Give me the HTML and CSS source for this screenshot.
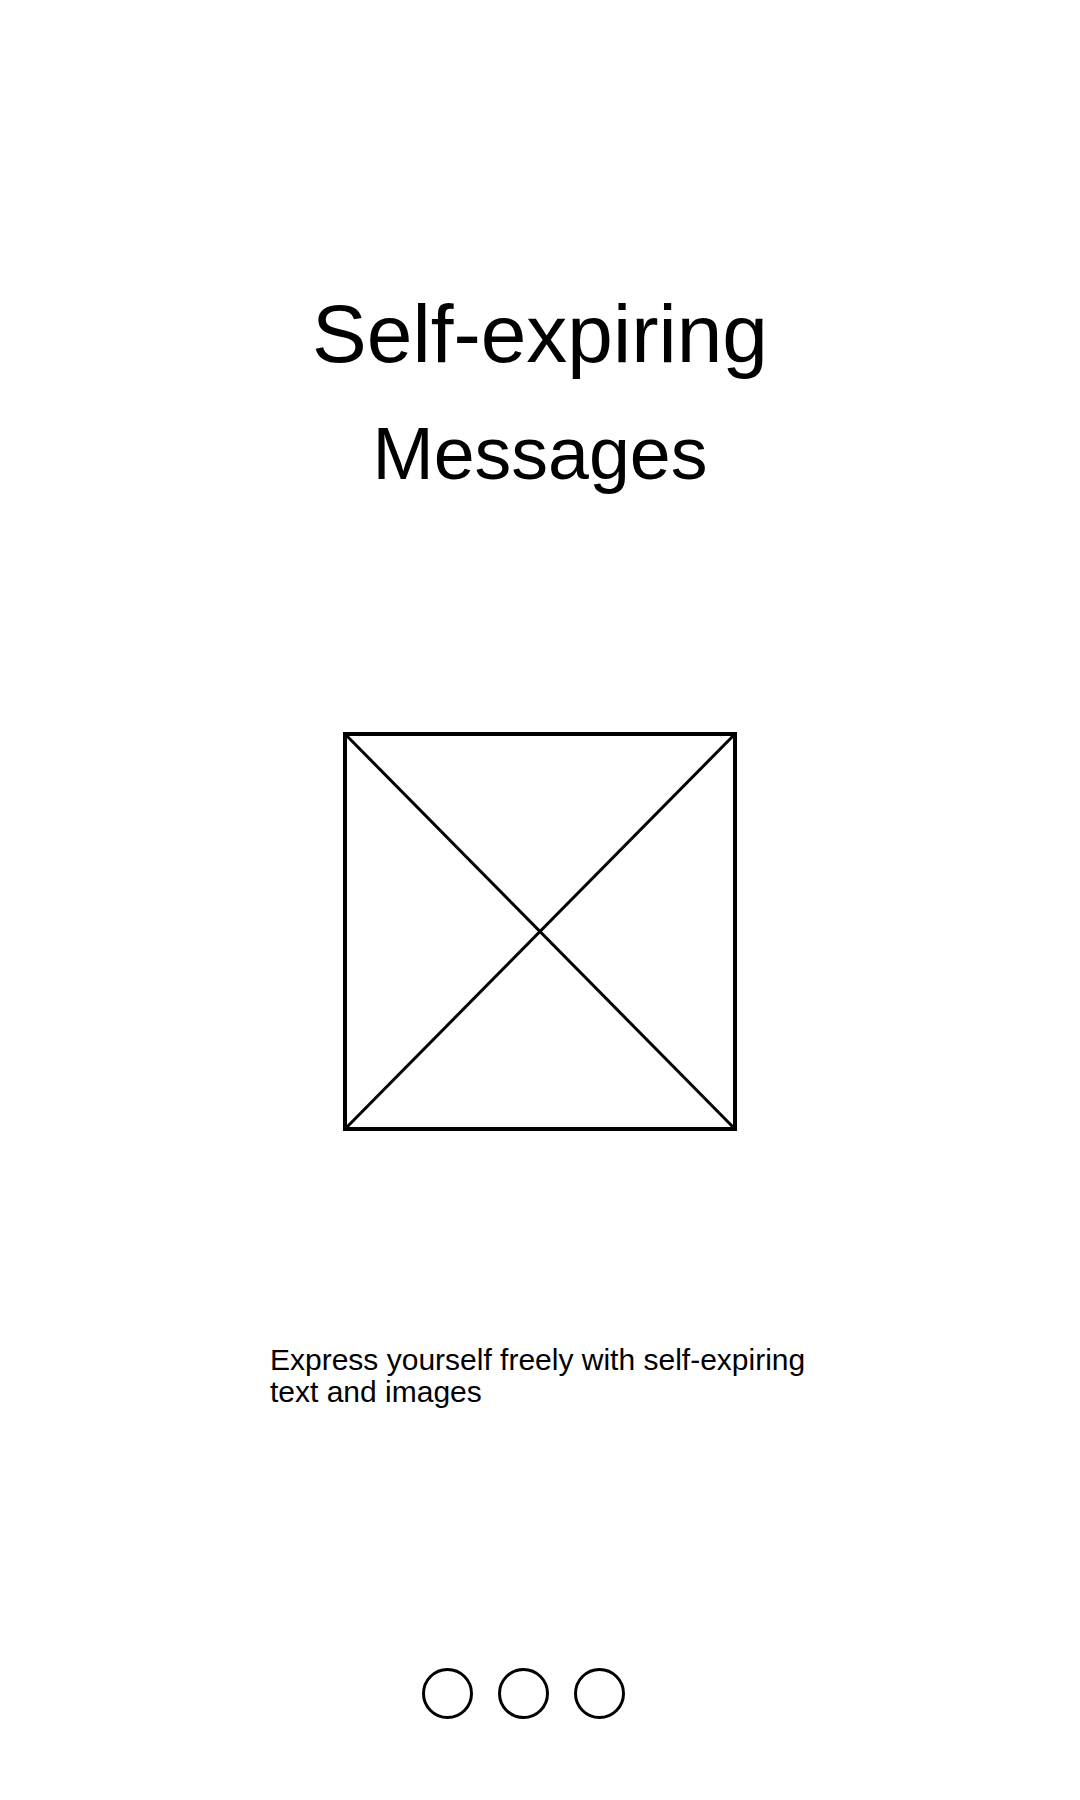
FILE: index.html
```html
<!DOCTYPE html>
<html lang="en">
<head>
<meta charset="utf-8">
<title>Self-expiring Messages</title>
<link rel="stylesheet" href="styles.css">
</head>
<body>
<main class="screen">
  <h1 class="title">
    <span class="title-line1">Self-expiring</span>
    <span class="title-line2">Messages</span>
  </h1>
  <div class="placeholder">
    <svg width="394" height="399" viewBox="0 0 394 399" aria-hidden="true">
      <rect x="2" y="2" width="390" height="395" fill="none" stroke="#000" stroke-width="4"/>
      <line x1="3" y1="3" x2="391" y2="396" stroke="#000" stroke-width="3"/>
      <line x1="391" y1="3" x2="3" y2="396" stroke="#000" stroke-width="3"/>
    </svg>
  </div>
  <p class="description">Express yourself freely with self-expiring text and images</p>
  <div class="dots">
    <span class="dot"></span>
    <span class="dot"></span>
    <span class="dot"></span>
  </div>
</main>
</body>
</html>
```
FILE: styles.css
```css
html, body {
  margin: 0;
  padding: 0;
  background: #fff;
}
body {
  font-family: "Liberation Sans", Arial, sans-serif;
  color: #000;
}
.screen {
  width: 1080px;
  height: 1800px;
  display: flex;
  flex-direction: column;
  align-items: center;
  padding-top: 284px;
  box-sizing: border-box;
}
.title {
  margin: 0;
  font-weight: normal;
  display: flex;
  flex-direction: column;
  align-items: center;
  gap: 20px;
}
.title-line1 {
  font-size: 82px;
  line-height: 100px;
}
.title-line2 {
  font-size: 73.5px;
  line-height: 100px;
}
.placeholder {
  margin-top: 228px;
  width: 394px;
  height: 399px;
}
.placeholder svg {
  display: block;
}
.description {
  margin: 213px 0 0;
  width: 540px;
  font-size: 30px;
  line-height: 32px;
  text-align: left;
}
.dots {
  margin-top: 260px;
  width: 100%;
  box-sizing: border-box;
  padding-right: 33px;
  display: flex;
  justify-content: center;
  gap: 25px;
}
.dot {
  width: 51px;
  height: 51px;
  box-sizing: border-box;
  border: 3px solid #000;
  border-radius: 50%;
}
```
